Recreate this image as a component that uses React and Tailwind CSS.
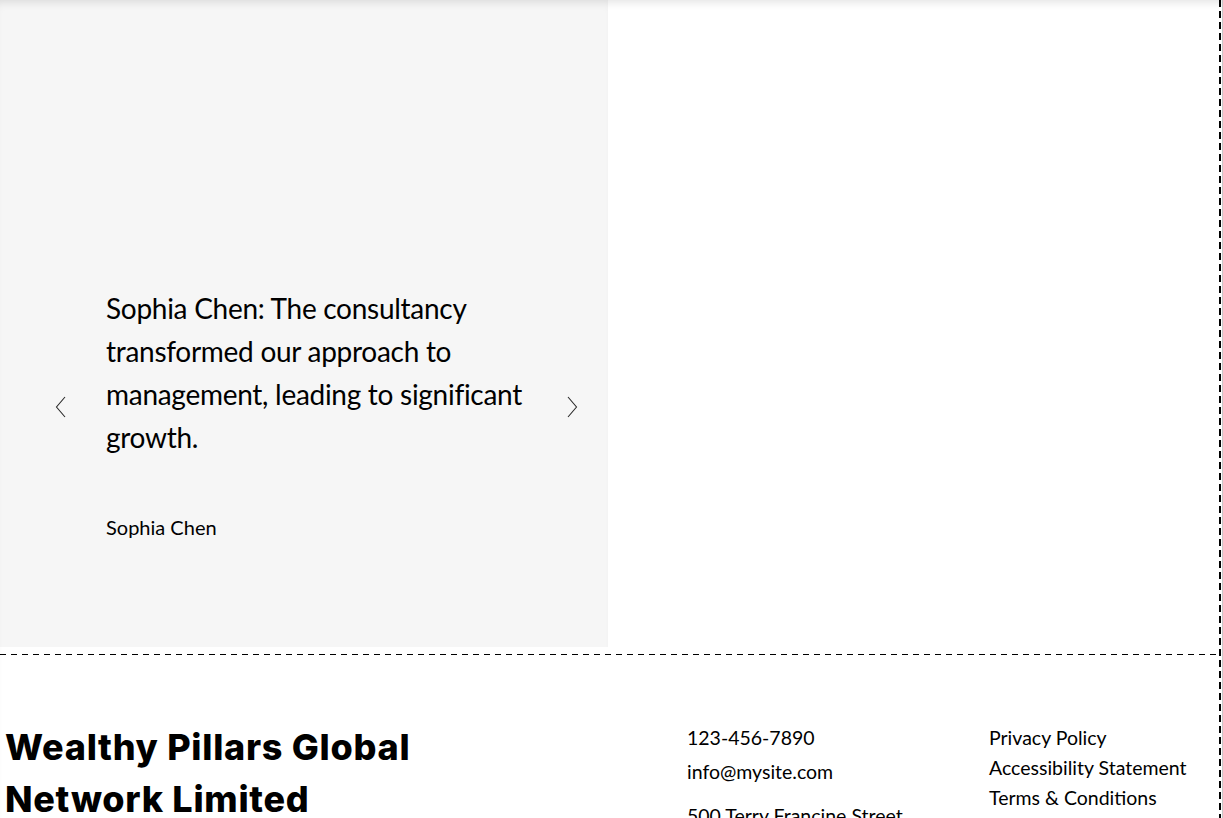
const futura = "font-['Lato','Liberation_Sans',sans-serif]";

const Chevron = ({ dir }) => (
    <svg width="12" height="22" viewBox="0 0 12 22" fill="none" stroke="#2a2a2a" strokeWidth="1.1">
        {dir === 'left' ? <path d="M10 1 L1.5 11 L10 21" /> : <path d="M2 1 L10.5 11 L2 21" />}
    </svg>
);

const App = () => {
    return (
        <div className="relative flex h-[818px] w-full overflow-hidden bg-white shadow-[inset_0_8px_10px_-6px_rgba(0,0,0,0.12)]">
            <div className="flex w-[1219px] shrink-0 flex-col">
                {/* Testimonial */}
                <section className="flex h-[654px] shrink-0 items-start">
                    <div className="flex h-[647px] w-[608px] items-start bg-[#f6f6f6] shadow-[inset_0_8px_10px_-6px_rgba(0,0,0,0.12)]">
                        <button className="ml-[55px] mt-[396px]">
                            <Chevron dir="left" />
                        </button>
                        <div className={`ml-[39px] mt-[287px] w-[440px] ${futura} text-black`}>
                            <p className="text-[28px] leading-[43px] tracking-[-0.01em]">
                                Sophia Chen: The consultancy transformed our approach to management, leading to significant growth.
                            </p>
                            <p className="mt-[55px] text-[20px] leading-[26px]">Sophia Chen</p>
                        </div>
                        <button className="ml-[20px] mt-[396px]">
                            <Chevron dir="right" />
                        </button>
                    </div>
                </section>

                {/* Divider */}
                <div className="h-px w-full shrink-0 bg-[repeating-linear-gradient(90deg,#000_0_6px,transparent_6px_11px)]"></div>

                {/* Footer */}
                <footer className="flex shrink-0 pt-[66px]">
                    <h2 className="ml-[5px] w-[682px] font-['Inter',sans-serif] text-[36px] font-extrabold leading-[52px] tracking-[0.02em] text-black">
                        Wealthy Pillars Global<br />Network Limited
                    </h2>
                    <div className={`w-[302px] ${futura} text-[19.5px] text-black`}>
                        <p className="leading-[34px]">123-456-7890</p>
                        <p className="leading-[34px]">info@mysite.com</p>
                        <p className="mt-[10px] leading-[34px]">500 Terry Francine Street</p>
                    </div>
                    <div className={`${futura} mt-[2px] flex flex-col text-[19.5px] leading-[30px] text-black`}>
                        <a>Privacy Policy</a>
                        <a>Accessibility Statement</a>
                        <a>Terms &amp; Conditions</a>
                    </div>
                </footer>
            </div>

            {/* Editor edge */}
            <div className="w-[2px] shrink-0 bg-[repeating-linear-gradient(180deg,#000_0_7px,transparent_7px_11px)]"></div>
            <div className="w-px shrink-0"></div>
            <div className="w-px shrink-0 bg-[#c8c8c8]"></div>
        </div>
    );
};

export default App;
